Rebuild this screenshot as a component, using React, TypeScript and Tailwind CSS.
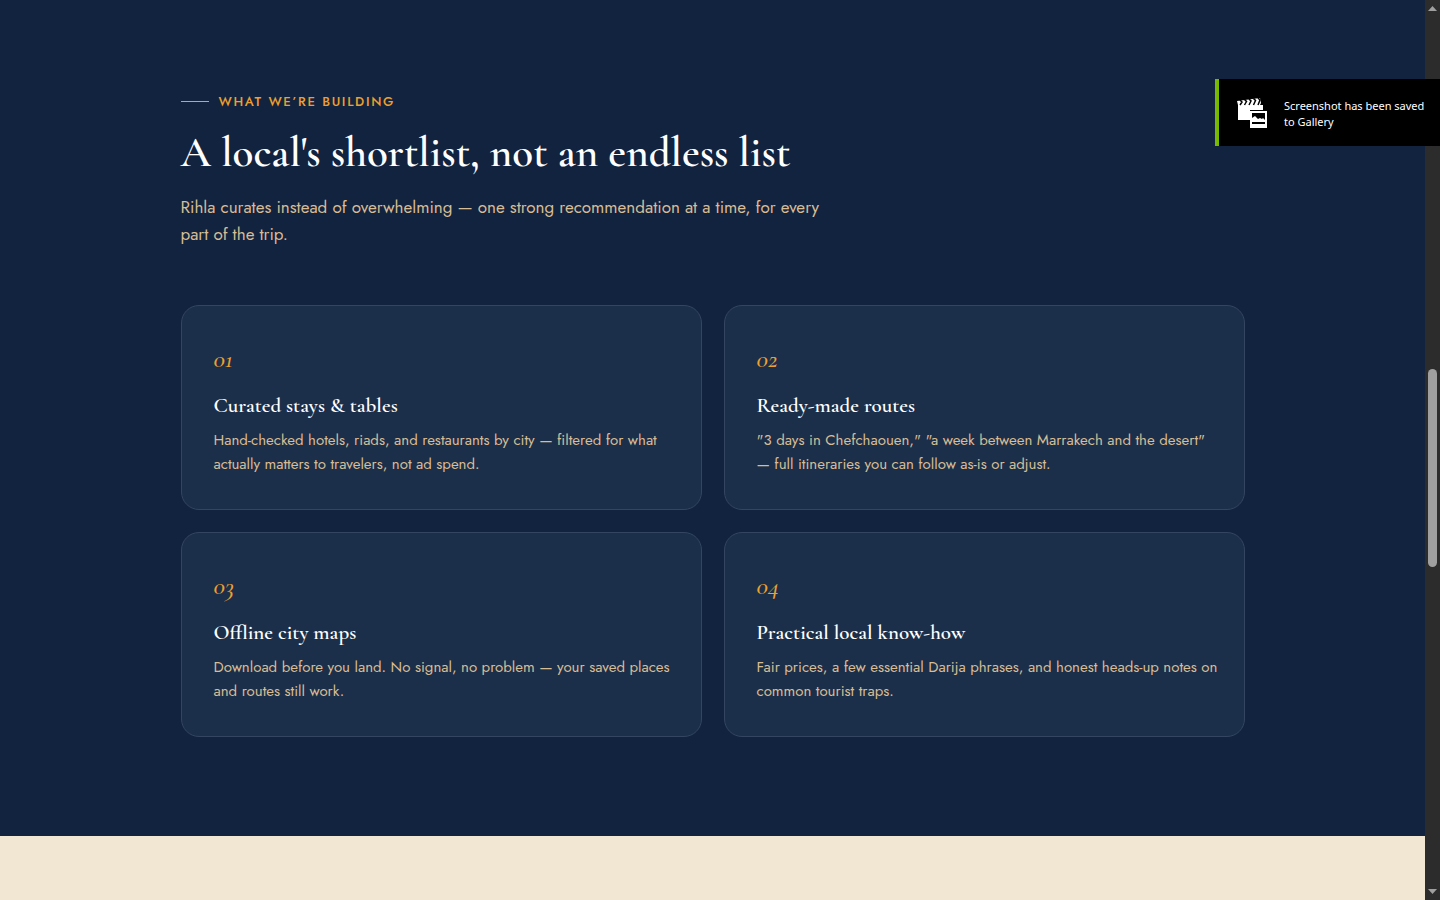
interface Feature {
  number: string;
  title: string;
  text: string;
}

const features: Feature[] = [
  {
    number: '01',
    title: 'Curated stays & tables',
    text: 'Hand-checked hotels, riads, and restaurants by city — filtered for what actually matters to travelers, not ad spend.',
  },
  {
    number: '02',
    title: 'Ready-made routes',
    text: '"3 days in Chefchaouen," "a week between Marrakech and the desert" — full itineraries you can follow as-is or adjust.',
  },
  {
    number: '03',
    title: 'Offline city maps',
    text: 'Download before you land. No signal, no problem — your saved places and routes still work.',
  },
  {
    number: '04',
    title: 'Practical local know-how',
    text: 'Fair prices, a few essential Darija phrases, and honest heads-up notes on common tourist traps.',
  },
];

function FeatureCard({ number, title, text }: Feature) {
  return (
    <article className="rounded-[18px] border border-[#334561] bg-[#1c2f4a] pt-8 pr-6 pb-[33px] pl-8">
      <div className="mb-3 font-[Cormorant_Garamond,Cormorant,Liberation_Serif,serif] text-[26px] leading-[42px] font-medium italic text-[#eea02e]">
        {number}
      </div>
      <h3 className="mb-[9px] font-[Cormorant_Garamond,Cormorant,Liberation_Serif,serif] text-[21px] leading-[27px] font-semibold text-white">
        {title}
      </h3>
      <p className="text-[15px] leading-6 text-[#d8bd94]">{text}</p>
    </article>
  );
}

function GalleryIcon() {
  return (
    <svg width="32" height="32" viewBox="0 0 32 32" className="shrink-0" aria-hidden="true">
      <path d="M2 8h25v5H14v10H2z" fill="#fff" />
      <path d="M1 4l23-3 1 5-1 2H2z" fill="#fff" />
      <path d="M4 3l2 2-2 3M8.500 2.500l2 2-2 3.500M13 2l2 2-2 4M17.500 1.500l2 2-2 4.500M22 1l2 2-2 5" fill="none" stroke="#000" strokeWidth="1.500" />
      <path d="M14 14h17v17H14z" fill="#fff" />
      <path d="M16 16h13v11H16z" fill="#000" />
      <path d="M16 25v-4l3-2 3 3 2-1 2 1 1-1 2 2v2z" fill="#fff" />
    </svg>
  );
}

function Toast() {
  return (
    <div
      role="status"
      className="absolute top-[79px] right-0 flex h-[67px] w-[225px] items-center gap-4 border-l-4 border-[#76b900] bg-black pl-[17px] text-white"
    >
      <GalleryIcon />
      <p className="pt-0.5 font-[Segoe_UI,Noto_Sans,sans-serif] text-[11px] leading-4">
        Screenshot has been saved
        <br />
        to Gallery
      </p>
    </div>
  );
}

function ScrollTrack() {
  return (
    <div className="flex w-[15px] shrink-0 flex-col items-center justify-between bg-[#2c2c2c] py-[6px]" aria-hidden="true">
      <svg width="9" height="5" viewBox="0 0 9 5">
        <path d="M4.500 0L9 5H0z" fill="#9f9f9f" />
      </svg>
      <div className="flex w-full flex-1 flex-col items-center">
        <div className="grow-[358]" />
        <div className="w-[9px] grow-[198] rounded-full bg-[#9f9f9f]" />
        <div className="grow-[322]" />
      </div>
      <svg width="9" height="5" viewBox="0 0 9 5">
        <path d="M0 0h9L4.500 5z" fill="#9f9f9f" />
      </svg>
    </div>
  );
}

export default function App() {
  return (
    <div className="relative flex min-h-screen font-[Jost,Lato,sans-serif]">
      <main className="flex min-w-0 flex-1 flex-col bg-[#f1e7d3]">
        <section className="bg-[#12233f] pt-[91px] pb-[99px]">
          <div className="mx-auto max-w-[1128px] px-8">
            <header className="mb-[57px] max-w-[640px]">
              <div className="mb-4 flex items-center gap-[10px] text-[13px] leading-[21px] font-medium tracking-[0.13em] text-[#eea02e] uppercase">
                <span className="h-px w-7 bg-[#eea02e]" />
                What we’re building
              </div>
              <h2 className="mb-[18px] font-[Cormorant_Garamond,Cormorant,Liberation_Serif,serif] text-[43px] leading-[48px] font-semibold text-white">
                A local's shortlist, not an endless list
              </h2>
              <p className="text-[17px] leading-[27px] text-[#d8bd94]">
                Rihla curates instead of overwhelming — one strong recommendation at a time, for every part of the trip.
              </p>
            </header>
            <div className="grid gap-[22px] md:grid-cols-2">
              {features.map((feature) => (
                <FeatureCard key={feature.number} {...feature} />
              ))}
            </div>
          </div>
        </section>
      </main>
      <ScrollTrack />
      <Toast />
    </div>
  );
}
